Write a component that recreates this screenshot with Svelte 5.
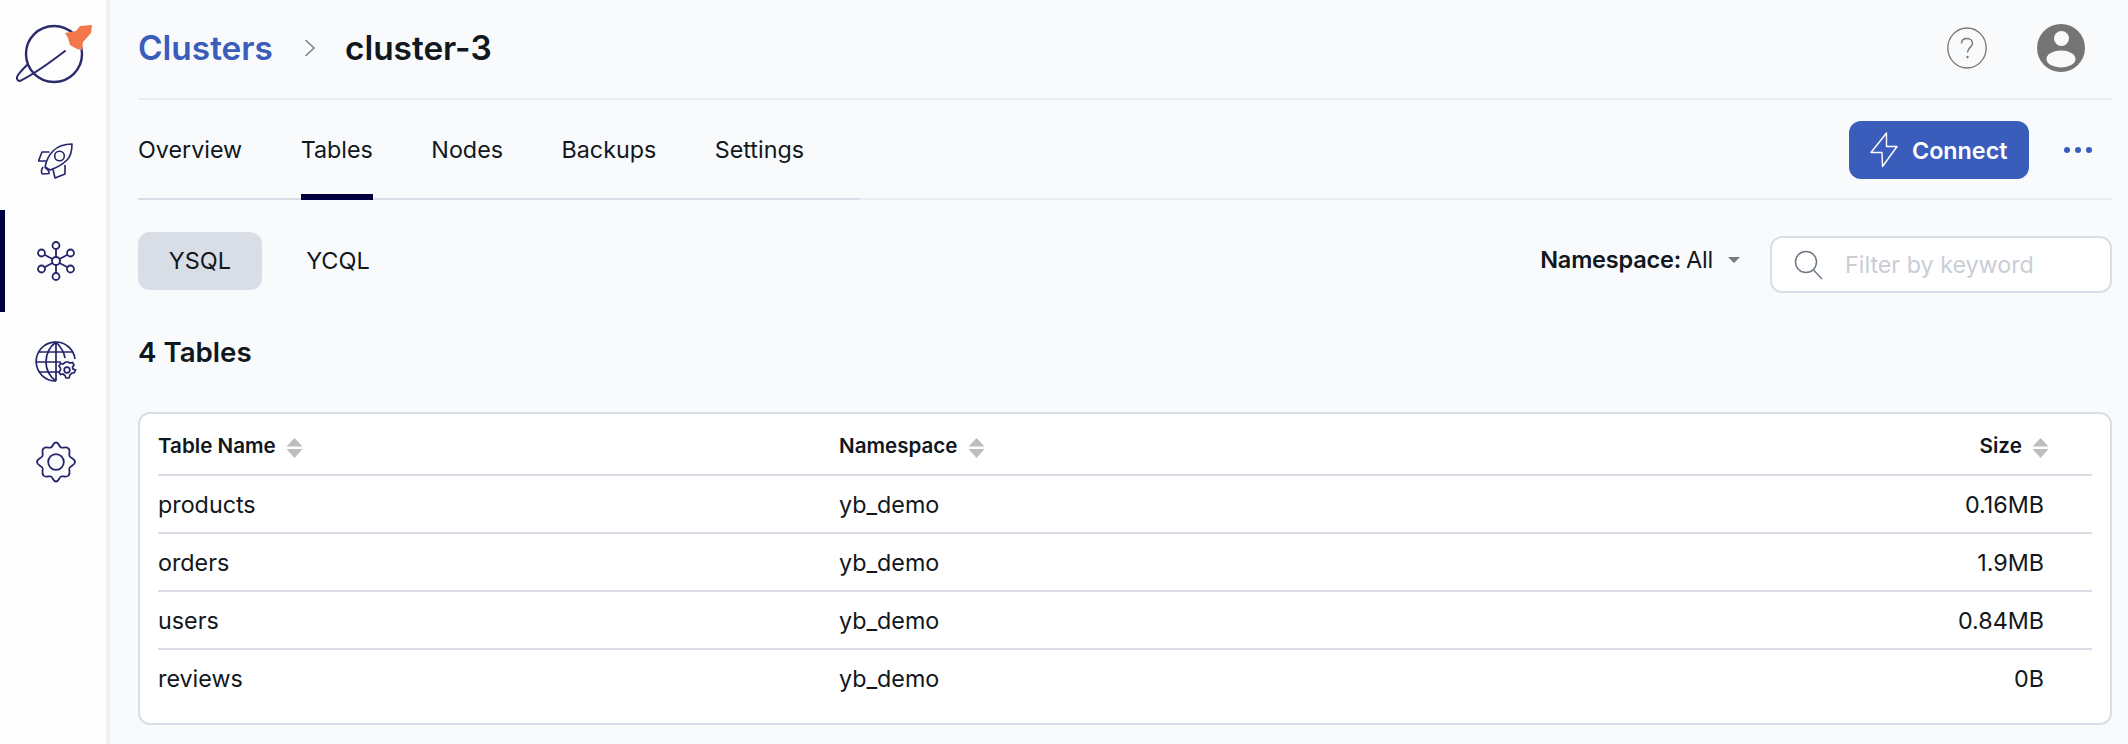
<script>
  const tabs = ['Overview', 'Tables', 'Nodes', 'Backups', 'Settings'];
  const rows = [
    { name: 'products', ns: 'yb_demo', size: '0.16MB' },
    { name: 'orders', ns: 'yb_demo', size: '1.9MB' },
    { name: 'users', ns: 'yb_demo', size: '0.84MB' },
    { name: 'reviews', ns: 'yb_demo', size: '0B' }
  ];
</script>

{#snippet sortIcon()}
  <svg class="sort" width="17" height="20" viewBox="0 0 17 20"><path d="M8.5 0L16.5 8.5H0.5Z M0.5 11H16.5L8.5 20Z" fill="#bdbdbd" /></svg>
{/snippet}

<div class="page">
  <aside class="sidebar">
    <div class="logo">
      <svg width="78" height="66" viewBox="0 0 78 66" fill="none">
        <circle cx="38" cy="34" r="28" stroke="#2b2a6b" stroke-width="2.400" />
        <path d="M49 31C36 41 20 53 4 61C1 61 0 58 2 55C5 51 8 48 11 45" stroke="#2b2a6b" stroke-width="2" stroke-linecap="round" />
        <path d="M49 13L60 11L64 6L76 5L75 13L67 22L66 30L61 29L54 25L52 18Z" fill="#f2774b" />
      </svg>
    </div>
    <div class="nav-item rocket">
      <svg width="36" height="36" viewBox="0 0 36 36" fill="none" stroke="#24246a" stroke-width="1.600" stroke-linejoin="round">
        <path d="M34 1C26 1 20 3 15 8C11 12 8 19 7 24L12 27C18 25 24 22 29 17C33 13 34 7 34 1Z" />
        <circle cx="21.500" cy="13" r="4.800" />
        <path d="M11.500 9H4L0.500 18H8" />
        <path d="M27 22V31L17 35L15 26.500" />
        <path d="M5 24C3 27 3 30 4.500 31L11 30.500C11.500 28.500 9 25.500 7 24.500" />
      </svg>
    </div>
    <div class="nav-item active">
      <svg width="40" height="40" viewBox="0 0 40 40" fill="none" stroke="#24246a" stroke-width="1.800">
        <circle cx="20" cy="20" r="4" />
        <circle cx="20" cy="4.500" r="3.500" />
        <circle cx="20" cy="35.500" r="3.500" />
        <circle cx="5.500" cy="12" r="3.500" />
        <circle cx="34.500" cy="12" r="3.500" />
        <circle cx="5.500" cy="28" r="3.500" />
        <circle cx="34.500" cy="28" r="3.500" />
        <path d="M20 8V16M20 24V32M8.500 13.800L16.500 18M31.500 13.800L23.500 18M8.500 26.200L16.500 22M31.500 26.200L23.500 22" />
      </svg>
    </div>
    <div class="nav-item">
      <svg width="42" height="42" viewBox="0 0 42 42" fill="none" stroke="#24246a" stroke-width="1.700">
        <path d="M21 40A19.500 19.500 0 1 1 40 18" />
        <path d="M21 1C13 7 11 14 11 21C11 28 14 35 21 40M21 1C26 6 29 11 30 17M21 1V40" />
        <path d="M4 11H37M1.500 21H26M4 31H25" />
        <path d="M33 21L35 22L37.500 21.500L39 24L37.500 26L38 28L40.500 29L39 32L37 32L35 34L34 37H31L30 34.500L28 33L25.500 33.500L24 31L25.500 29V27L24 25L25.500 22.500L28 23L30 21.500L31 21Z" fill="#fdfdfe" />
        <circle cx="32" cy="29" r="2.800" />
      </svg>
    </div>
    <div class="nav-item">
      <svg width="42" height="42" viewBox="0 0 42 42" fill="none" stroke="#24246a" stroke-width="1.800" stroke-linejoin="round">
        <circle cx="21" cy="21" r="7.800" />
        <path d="M21 1.500C24 1.500 24 5.500 26 6.500C28 7.500 31 4.800 33.500 7.500C36 10 33.500 12.500 34.500 15C35.500 17.500 40 17.500 40 21C40 24.500 35.500 24.500 34.500 27C33.500 29.500 36 32 33.500 34.500C31 37.200 28 34.500 26 35.500C24 36.500 24 40.500 21 40.500C18 40.500 18 36.500 16 35.500C14 34.500 11 37.200 8.500 34.500C6 32 8.500 29.500 7.500 27C6.500 24.500 2 24.500 2 21C2 17.500 6.500 17.500 7.500 15C8.500 12.500 6 10 8.500 7.500C11 4.800 14 7.500 16 6.500C18 5.500 18 1.500 21 1.500Z" />
      </svg>
    </div>
  </aside>

  <main class="main">
    <header class="header">
      <div class="crumbs">
        <span class="crumb-link">Clusters</span>
        <svg class="chevron" width="12" height="20" viewBox="0 0 12 20" fill="none"><path d="M1.500 2L10 10L1.500 18" stroke="#7a838c" stroke-width="1.600" /></svg>
        <span class="crumb-current">cluster-3</span>
      </div>
      <div class="header-icons">
        <svg width="40" height="42" viewBox="0 0 40 42" fill="none">
          <ellipse cx="20" cy="21" rx="19.200" ry="20" stroke="#757575" stroke-width="1.300" />
          <path d="M14.500 16.500C14.500 13 17 11.500 20 11.500C23 11.500 25.500 13.500 25.500 16.500C25.500 20 20.500 20.500 20.500 25.500" stroke="#757575" stroke-width="1.400" />
          <circle cx="20.500" cy="30" r="1.200" fill="#757575" />
        </svg>
        <svg width="48" height="48" viewBox="0 0 48 48"><circle cx="24" cy="24" r="24" fill="#757575" /><circle cx="24.500" cy="14.500" r="7.500" fill="#f9fafc" /><ellipse cx="24" cy="35" rx="14.500" ry="8.500" fill="#f9fafc" /></svg>
      </div>
    </header>

    <div class="tabs-row">
      <nav class="tabs">
        {#each tabs as tab}
          <span class="tab" class:selected={tab === 'Tables'}>{tab}</span>
        {/each}
      </nav>
      <div class="actions">
        <button class="connect">
          <svg width="28" height="36" viewBox="0 0 28 36" fill="none"><path d="M16.500 1L1 20.500H12L12.500 34.500L27 14.500H16.500Z" stroke="#fff" stroke-width="1.400" stroke-linejoin="round" /></svg>
          Connect
        </button>
        <div class="dots"><i></i><i></i><i></i></div>
      </div>
    </div>

    <div class="filters">
      <div class="api-switch">
        <span class="api on">YSQL</span>
        <span class="api">YCQL</span>
      </div>
      <div class="filter-right">
        <div class="namespace"><b>Namespace:</b> All <span class="caret"></span></div>
        <div class="search">
          <svg width="30" height="30" viewBox="0 0 30 30" fill="none" stroke="#6f7a86" stroke-width="1.500"><circle cx="12" cy="12" r="10.500" /><path d="M19.500 20L28 29" /></svg>
          <input placeholder="Filter by keyword" />
        </div>
      </div>
    </div>

    <h2 class="count">4 Tables</h2>

    <div class="card">
      <table>
        <thead>
          <tr>
            <th class="c-name">Table Name {@render sortIcon()}</th>
            <th>Namespace {@render sortIcon()}</th>
            <th class="c-size">Size {@render sortIcon()}</th>
          </tr>
        </thead>
        <tbody>
          {#each rows as row}
            <tr>
              <td>{row.name}</td>
              <td>{row.ns}</td>
              <td class="c-size"><span class="size-val">{row.size}</span></td>
            </tr>
          {/each}
        </tbody>
      </table>
    </div>
  </main>
</div>

<style>
  :global(body) {
    margin: 0;
    background: #f9fafc;
    font-family: Inter, "Noto Sans", sans-serif;
    color: #11171c;
  }

  .page {
    display: flex;
    height: 744px;
    overflow: hidden;
  }

  .sidebar {
    width: 106px;
    flex: none;
    background: #fdfdfe;
    border-right: 4px solid #eef0f5;
    display: flex;
    flex-direction: column;
    align-items: center;
  }

  .logo {
    height: 99px;
    width: 100%;
    display: flex;
    padding-left: 16px;
    padding-top: 20px;
    box-sizing: border-box;
  }

  .nav-item {
    width: 100%;
    height: 100px;
    display: flex;
    align-items: center;
    justify-content: center;
    box-sizing: border-box;
    padding-left: 6px;
  }

  .nav-item.rocket {
    height: 111px;
    padding-top: 12px;
  }

  .nav-item.active {
    height: 102px;
    border-left: 5px solid #000041;
    padding-left: 1px;
  }

  .main {
    flex: 1;
    min-width: 0;
    padding: 0 16px 0 28px;
  }

  .header {
    height: 100px;
    box-sizing: border-box;
    border-bottom: 2px solid #eceef4;
    display: flex;
    align-items: center;
    justify-content: space-between;
    padding-bottom: 2px;
  }

  .crumbs {
    display: flex;
    align-items: center;
    font-size: 33.4px;
    font-weight: 600;
  }

  .crumb-link {
    color: #3a5dbb;
  }

  .chevron {
    margin: 0 29px 0 31px;
  }

  .crumb-current {
    color: #11171c;
  }

  .header-icons {
    display: flex;
    align-items: center;
    gap: 50px;
    padding-right: 27px;
  }

  .tabs-row {
    height: 100px;
    box-sizing: border-box;
    border-bottom: 2px solid #eceef4;
    display: flex;
    justify-content: space-between;
  }

  .tabs {
    width: 722px;
    height: 100px;
    box-sizing: border-box;
    border-bottom: 2px solid #d9dee6;
    display: flex;
    gap: 58.500px;
  }

  .tab {
    font-size: 23.300px;
    height: 98px;
    line-height: 100px;
    box-sizing: border-box;
    color: #11171c;
  }

  .tab.selected {
    height: 100px;
    border-bottom: 6px solid #000041;
  }

  .actions {
    display: flex;
    align-items: center;
    padding-right: 20px;
    gap: 35px;
    height: 98px;
    padding-top: 2px;
    box-sizing: border-box;
  }

  .connect {
    width: 180px;
    height: 58px;
    border: 0;
    border-radius: 12px;
    background: #3a5dbb;
    color: #fff;
    font: 600 23.300px Inter, sans-serif;
    display: flex;
    align-items: center;
    gap: 14px;
    padding: 0 0 0 21px;
  }

  .dots {
    display: flex;
    gap: 5px;
  }

  .dots i {
    width: 6px;
    height: 6px;
    border-radius: 50%;
    background: #3a5dbb;
  }

  .filters {
    display: flex;
    justify-content: space-between;
    align-items: flex-start;
    margin-top: 32px;
    height: 62px;
  }

  .api-switch {
    display: flex;
    gap: 14px;
  }

  .api {
    width: 124px;
    height: 58px;
    line-height: 58px;
    text-align: center;
    border-radius: 12px;
    font-size: 23.500px;
  }

  .api.on {
    background: #d9dee6;
  }

  .filter-right {
    display: flex;
    align-items: center;
    gap: 30px;
    margin-top: 4px;
  }

  .namespace {
    font-size: 23.500px;
    letter-spacing: -0.2px;
    display: flex;
    align-items: center;
    gap: 5px;
    margin-top: -10px;
  }

  .namespace b {
    font-weight: 600;
  }

  .caret {
    width: 0;
    height: 0;
    border: 6px solid transparent;
    border-top: 6px solid #737b85;
    border-bottom: 0;
    margin-left: 10px;
  }

  .search {
    width: 342px;
    height: 57px;
    box-sizing: border-box;
    border: 2px solid #d9dee6;
    border-radius: 12px;
    background: #fff;
    display: flex;
    align-items: center;
    gap: 19px;
    padding-left: 22px;
  }

  .search input {
    border: 0;
    outline: 0;
    background: transparent;
    flex: 1;
    min-width: 0;
    font: 23.300px Inter, sans-serif;
    color: #11171c;
  }

  .search input::placeholder {
    color: #c8ced5;
    opacity: 1;
  }

  .count {
    margin: 42px 0 0;
    font-size: 27.700px;
    font-weight: 600;
    line-height: 32px;
  }

  .card {
    margin-top: 44px;
    height: 313px;
    box-sizing: border-box;
    background: #fff;
    border: 2px solid #d9dee6;
    border-radius: 12px;
    padding: 0 18px;
  }

  table {
    width: 100%;
    border-collapse: collapse;
    table-layout: fixed;
  }

  th {
    height: 61px;
    text-align: left;
    font-size: 20.600px;
    font-weight: 600;
    padding: 2px 0 0;
    box-sizing: border-box;
    border-bottom: 2px solid #d9dee6;
  }

  th.c-name {
    width: 681px;
  }

  td {
    height: 58px;
    font-size: 23.300px;
    padding: 0;
    border-bottom: 2px solid #d9dee6;
    box-sizing: border-box;
  }

  tbody tr:last-child td {
    border-bottom: 0;
  }

  .c-size {
    text-align: right;
    width: 320px;
  }

  th.c-size {
    padding-right: 43px;
  }

  .size-val {
    margin-right: 48px;
  }

  .sort {
    vertical-align: -5px;
    margin-left: 5px;
  }
</style>
